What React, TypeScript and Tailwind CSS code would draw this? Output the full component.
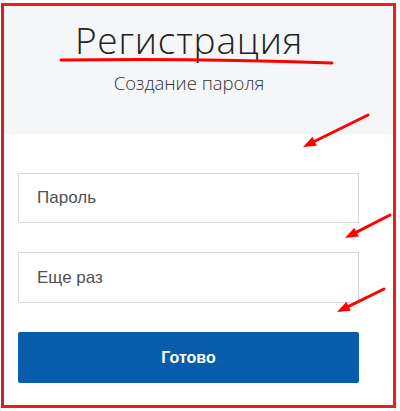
import React from 'react';

const Arrow: React.FC<{ x1: number; y1: number; x2: number; y2: number }> = ({ x1, y1, x2, y2 }) => {
  const a = Math.atan2(y2 - y1, x2 - x1);
  const len = 13;
  const w = 5;
  const bx = x2 - Math.cos(a) * len;
  const by = y2 - Math.sin(a) * len;
  const p1 = `${bx + Math.sin(a) * w},${by - Math.cos(a) * w}`;
  const p2 = `${bx - Math.sin(a) * w},${by + Math.cos(a) * w}`;
  return (
    <g>
      <line x1={x1} y1={y1} x2={bx} y2={by} stroke="#f00" strokeWidth={3} strokeLinecap="round" />
      <polygon points={`${x2},${y2} ${p1} ${p2}`} fill="#f00" />
    </g>
  );
};

export default function App() {
  return (
    <div className="relative w-[400px] h-[411px] bg-white overflow-hidden">
      <div className="ml-[1px] mt-[3px] w-[395px] h-[405px] border-[3px] border-[#ee1c1c] border-l-[#c92424] flex flex-col">
        <div className="h-[128px] bg-[#f5f6f7] flex flex-col items-center pt-[13px] pr-[19px]">
          <h1
            className="text-[37px] leading-[42px] text-[#222] font-light tracking-[0.8px]"
            style={{ fontFamily: '"Open Sans", "Noto Sans", sans-serif' }}
          >
            Регистрация
          </h1>
          <p
            className="mt-[10px] text-[18.5px] leading-[24px] text-[#333] font-light"
            style={{ fontFamily: '"Open Sans", "Noto Sans", sans-serif' }}
          >
            Создание пароля
          </p>
        </div>
        <div className="pl-[14px] pt-[39px] flex flex-col" style={{ fontFamily: '"Liberation Sans", Arial, sans-serif' }}>
          <div className="w-[341px] h-[50px] border border-[#d9d9d9] bg-white flex items-center pl-[18px] text-[17px] text-[#505050]">
            Пароль
          </div>
          <div className="mt-[29px] w-[341px] h-[51px] border border-[#d9d9d9] bg-white flex items-center pl-[18px] text-[17px] text-[#505050]">
            Еще раз
          </div>
          <button className="mt-[29px] w-[341px] h-[51px] rounded-[2px] bg-[#075dab] text-white text-[16px] font-bold">
            Готово
          </button>
        </div>
      </div>
      <svg className="absolute inset-0 pointer-events-none" width="400" height="411">
        <path d="M61 60 Q200 58 332 63" stroke="#f00" strokeWidth={3} fill="none" strokeLinecap="round" />
        <Arrow x1={368} y1={115} x2={303} y2={147} />
        <Arrow x1={390} y1={215} x2={345} y2={238} />
        <Arrow x1={384} y1={289} x2={337} y2={312} />
      </svg>
    </div>
  );
}
